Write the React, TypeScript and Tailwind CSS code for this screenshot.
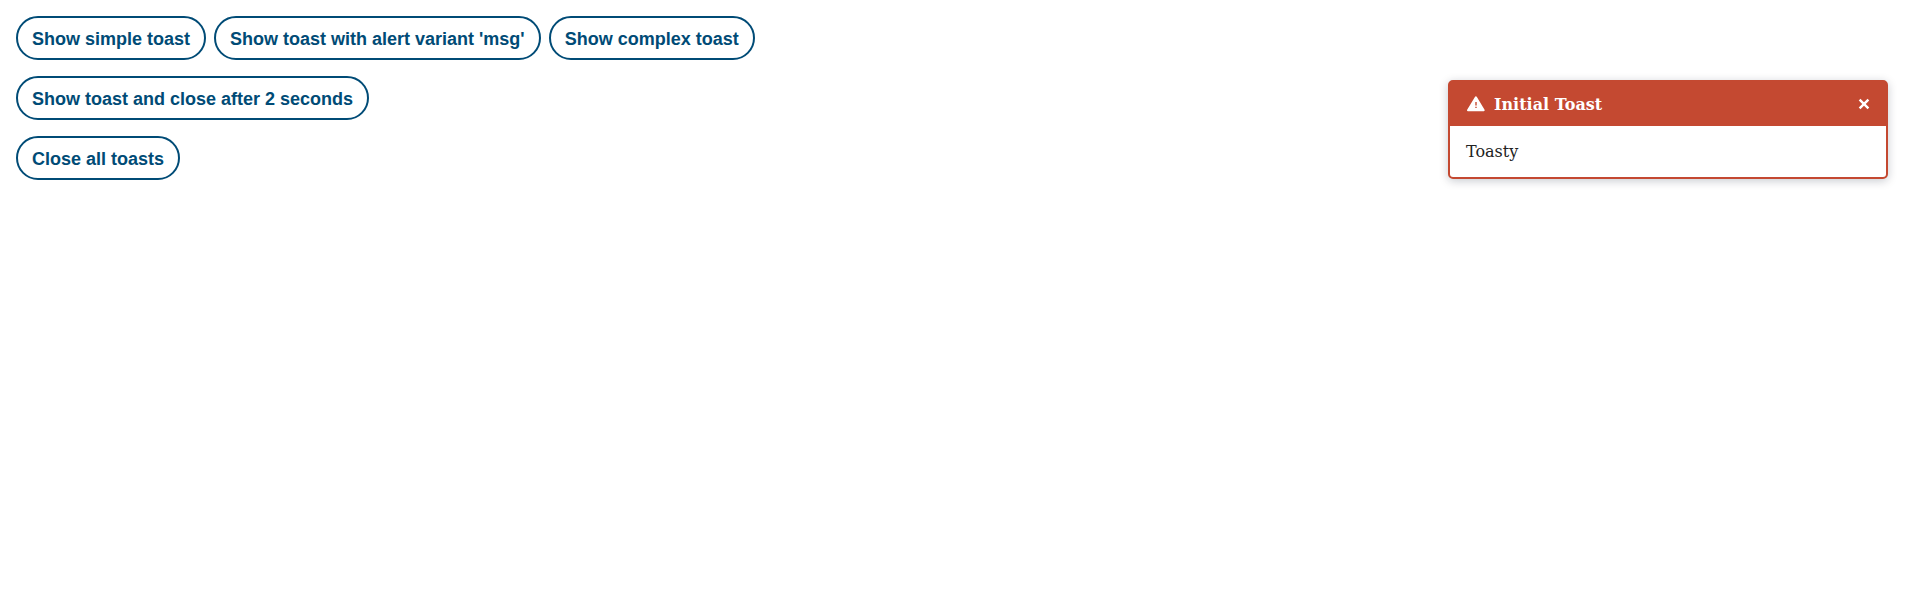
import React from "react";

function PillButton({ children }: { children: React.ReactNode }) {
  return (
    <button className="h-11 shrink-0 whitespace-nowrap rounded-full border-2 border-[#004b76] bg-white px-3.5 pt-px font-['Liberation_Sans',sans-serif] text-[18px] font-bold leading-6 text-[#004b76]">
      {children}
    </button>
  );
}

function Toast() {
  return (
    <section className="mt-[64px] mr-4 w-[440px] self-start overflow-hidden rounded-[5px] border-2 border-[#c44931] bg-[#c44931] font-['DejaVu_Serif',serif] text-base leading-[19px] text-[#222222] shadow-[0_2px_10px_rgba(0,20,40,0.22)]">
      <header className="flex h-11 items-center px-4 text-white">
        <svg className="mr-2 size-5" viewBox="0 0 20 20" fill="none">
          <path d="M9.9 3.3 17.7 16.2H2Z" fill="currentColor" stroke="currentColor" strokeWidth="2" strokeLinejoin="round" />
          <path d="M10 8v3.4M10 12.8v1.3" stroke="#c44931" strokeWidth="1.4" />
        </svg>
        <h2 className="flex-1 pt-px font-bold">Initial Toast</h2>
        <button aria-label="Close">
          <svg className="size-3" viewBox="0 0 12 12" fill="none">
            <path d="m1.6 1.6 8.8 8.8M10.4 1.6l-8.8 8.8" stroke="currentColor" strokeWidth="2.4" />
          </svg>
        </button>
      </header>
      <p className="bg-white p-4">Toasty</p>
    </section>
  );
}

export default function App() {
  return (
    <main className="flex h-[600px] justify-between bg-white p-4">
      <div className="flex flex-col gap-4">
        <div className="flex gap-2">
          <PillButton>Show simple toast</PillButton>
          <PillButton>Show toast with alert variant 'msg'</PillButton>
          <PillButton>Show complex toast</PillButton>
        </div>
        <div className="flex">
          <PillButton>Show toast and close after 2 seconds</PillButton>
        </div>
        <div className="flex">
          <PillButton>Close all toasts</PillButton>
        </div>
      </div>
      <Toast />
    </main>
  );
}
